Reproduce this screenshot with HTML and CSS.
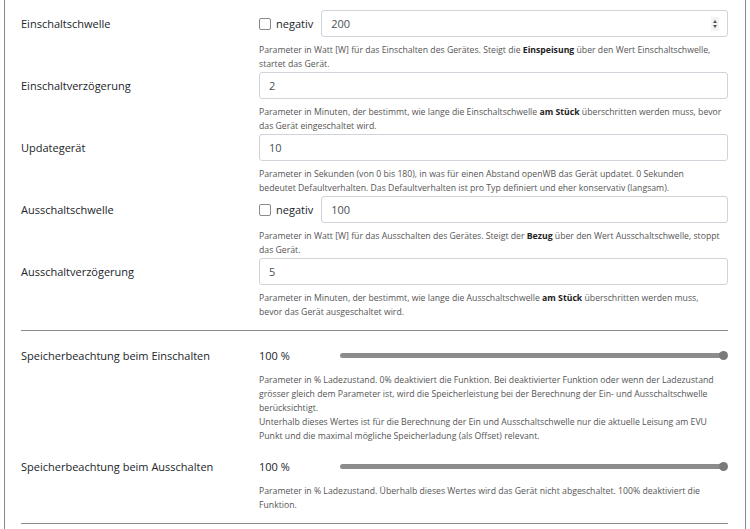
FILE: index.html
```html
<!DOCTYPE html>
<html lang="de">
<head>
<meta charset="utf-8">
<title>Geräteeinstellungen</title>
<link rel="stylesheet" href="styles.css">
</head>
<body>
<div class="card">
  <div class="row">
    <div class="lbl">Einschaltschwelle</div>
    <div class="ctl">
      <div class="inline">
        <label class="check"><span class="box"></span>negativ</label>
        <div class="input">200<span class="spin"><span class="up"></span><span class="down"></span></span></div>
      </div>
      <p class="help">Parameter in Watt [W] für das Einschalten des Gerätes. Steigt die <b>Einspeisung</b> über den Wert Einschaltschwelle,<br>startet das Gerät.</p>
    </div>
  </div>
  <div class="row">
    <div class="lbl">Einschaltverzögerung</div>
    <div class="ctl">
      <div class="input">2</div>
      <p class="help">Parameter in Minuten, der bestimmt, wie lange die Einschaltschwelle <b>am Stück</b> überschritten werden muss, bevor<br>das Gerät eingeschaltet wird.</p>
    </div>
  </div>
  <div class="row">
    <div class="lbl">Updategerät</div>
    <div class="ctl">
      <div class="input">10</div>
      <p class="help">Parameter in Sekunden (von 0 bis 180), in was für einen Abstand openWB das Gerät updatet. 0 Sekunden<br>bedeutet Defaultverhalten. Das Defaultverhalten ist pro Typ definiert und eher konservativ (langsam).</p>
    </div>
  </div>
  <div class="row">
    <div class="lbl">Ausschaltschwelle</div>
    <div class="ctl">
      <div class="inline">
        <label class="check"><span class="box"></span>negativ</label>
        <div class="input">100</div>
      </div>
      <p class="help">Parameter in Watt [W] für das Ausschalten des Gerätes. Steigt der <b>Bezug</b> über den Wert Ausschaltschwelle, stoppt<br>das Gerät.</p>
    </div>
  </div>
  <div class="row">
    <div class="lbl">Ausschaltverzögerung</div>
    <div class="ctl">
      <div class="input">5</div>
      <p class="help">Parameter in Minuten, der bestimmt, wie lange die Ausschaltschwelle <b>am Stück</b> überschritten werden muss,<br>bevor das Gerät ausgeschaltet wird.</p>
    </div>
  </div>
  <hr class="sep">
  <div class="row row-range">
    <div class="lbl">Speicherbeachtung beim Einschalten</div>
    <div class="ctl">
      <div class="range">
        <span class="val">100 %</span>
        <span class="track"><span class="thumb"></span></span>
      </div>
      <p class="help">Parameter in % Ladezustand. 0% deaktiviert die Funktion. Bei deaktivierter Funktion oder wenn der Ladezustand<br>grösser gleich dem Parameter ist, wird die Speicherleistung bei der Berechnung der Ein- und Ausschaltschwelle<br>berücksichtigt.<br>Unterhalb dieses Wertes ist für die Berechnung der Ein und Ausschaltschwelle nur die aktuelle Leisung am EVU<br>Punkt und die maximal mögliche Speicherladung (als Offset) relevant.</p>
    </div>
  </div>
  <div class="row row-range">
    <div class="lbl">Speicherbeachtung beim Ausschalten</div>
    <div class="ctl">
      <div class="range">
        <span class="val">100 %</span>
        <span class="track"><span class="thumb"></span></span>
      </div>
      <p class="help">Parameter in % Ladezustand. Überhalb dieses Wertes wird das Gerät nicht abgeschaltet. 100% deaktiviert die<br>Funktion.</p>
    </div>
  </div>
  <hr class="sep">
</div>
</body>
</html>
```

FILE: styles.css
```css
html, body {
  margin: 0;
  padding: 0;
  background: #fff;
}
body {
  font-family: "Open Sans", "Noto Sans", sans-serif;
  font-size: 11px;
  color: #212529;
}
.card {
  margin: 0 4px;
  min-height: 529px;
  box-sizing: border-box;
  border-left: 1px solid #8a8a8a;
  border-right: 1px solid #8a8a8a;
  padding: 10px 17px 0 16px;
}
.row {
  display: grid;
  grid-template-columns: 238px 1fr;
  margin-bottom: 1px;
}
.lbl {
  line-height: 27px;
  height: 27px;
}
.ctl {
  min-width: 0;
}
.inline {
  display: flex;
  align-items: center;
}
.check {
  display: flex;
  align-items: center;
  gap: 5px;
  margin-right: 8px;
  color: #212529;
}
.box {
  width: 12px;
  height: 12px;
  border: 1px solid #8a8a8a;
  border-radius: 2px;
  box-sizing: border-box;
  background: #fff;
}
.input {
  flex: 1;
  height: 27px;
  box-sizing: border-box;
  border: 1px solid #ced4da;
  border-radius: 3px;
  padding: 0 9px;
  line-height: 25px;
  color: #495057;
  display: flex;
  align-items: center;
  justify-content: space-between;
}
.spin {
  display: flex;
  flex-direction: column;
  gap: 2px;
  margin-right: -1px;
  padding: 3px 2px;
  background: #f3f3f3;
}
.up, .down {
  width: 0;
  height: 0;
  border-left: 2px solid transparent;
  border-right: 2px solid transparent;
}
.up { border-bottom: 3px solid #555; }
.down { border-top: 3px solid #555; }
.help {
  margin: 7px 0 0;
  font-size: 8.7px;
  line-height: 13.5px;
  color: #555;
  white-space: nowrap;
}
.help b {
  color: #222;
  font-weight: 700;
}
.sep {
  border: 0;
  border-top: 1px solid #8a8a8a;
  margin: 11px 0 11px;
}
.row-range {
  margin-bottom: 10px;
}
.row-range .help {
  margin-top: 4px;
  line-height: 14px;
}
.range {
  display: flex;
  align-items: center;
  height: 27px;
}
.val {
  width: 81px;
}
.track {
  flex: 1;
  height: 5px;
  border-radius: 3px;
  background: #8c8c8c;
  position: relative;
  margin-right: 1px;
}
.thumb {
  position: absolute;
  right: -1px;
  top: -2px;
  width: 9px;
  height: 9px;
  border-radius: 50%;
  background: #7a7a7a;
}
```
